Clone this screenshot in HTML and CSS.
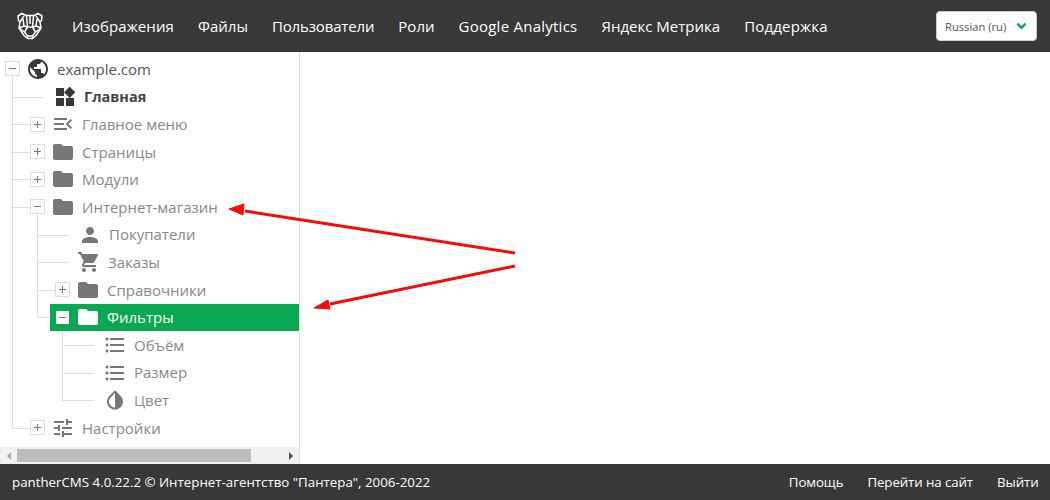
FILE: index.html
```html
<!DOCTYPE html>
<html lang="ru">
<head>
<meta charset="utf-8">
<title>pantherCMS</title>
<link rel="stylesheet" href="styles.css">
</head>
<body>
<div class="app">
  <header class="topbar">
    <svg class="logo" viewBox="0 0 28 28" fill="none" stroke="#fff" stroke-width="1.5" stroke-linejoin="round">
      <path d="M2 4 L6 1.5 L10 3.5 L18 3.5 L22 1.5 L26 4 L25.5 8.5 L24 10 L25 16 L20 23.5 L16.5 26.5 L11.5 26.5 L8 23.5 L3 16 L4 10 L2.5 8.5 Z"/>
      <path d="M4 10 L8 4 M24 10 L20 4 M10.5 3.5 L11.5 15 L8.5 20 L11.5 24 L16.5 24 L19.5 20 L16.5 15 L17.5 3.5 M14 3.5 L14 12 M7 7 L8 14 L3 16 M21 7 L20 14 L25 16 M8 14 L11.5 15 M20 14 L16.5 15 M8.5 20 L3 16 M19.5 20 L25 16 M11.5 15 L16.5 15 M11.5 24 L11.5 26.5 M16.5 24 L16.5 26.5"/>
    </svg>
    <nav class="mainnav">
      <a class="wide-s">Изображения</a><a>Файлы</a><a class="tight">Пользователи</a><a>Роли</a><a class="wide-l">Google Analytics</a><a>Яндекс Метрика</a><a class="wide-m">Поддержка</a>
    </nav>
    <div class="lang">
      <span>Russian (ru)</span>
      <svg class="chev" viewBox="0 0 12 8"><path d="M1.5 1.5 L6 6 L10.5 1.5" fill="none" stroke="#0aa850" stroke-width="2.6"/></svg>
    </div>
  </header>

  <div class="middle">
    <aside class="side">
      <div class="tree">
        <div class="row root">
          <i class="tog minus"></i>
          <svg class="ic dark" viewBox="0 0 24 24"><path d="M12 2C6.48 2 2 6.48 2 12s4.48 10 10 10 10-4.48 10-10S17.52 2 12 2zm-1 17.93c-3.95-.49-7-3.85-7-7.93 0-.62.08-1.21.21-1.79L9 15v1c0 1.1.9 2 2 2v1.93zm6.9-2.54c-.26-.81-1-1.39-1.9-1.39h-1v-3c0-.55-.45-1-1-1H8v-2h2c.55 0 1-.45 1-1V7h2c1.1 0 2-.9 2-2v-.41c2.93 1.19 5 4.06 5 7.41 0 2.08-.8 3.97-2.1 5.39z"/></svg>
          <span class="label rootlabel">example.com</span>
        </div>
        <div class="row l1 leaf home">
          <svg class="ic dark" viewBox="0 0 24 24"><path d="M13 13v8h8v-8h-8zM3 21h8v-8H3v8zM3 3v8h8V3H3zm13.66-1.31L11 7.34 16.66 13l5.66-5.66-5.66-5.65z"/></svg>
          <span class="label bold">Главная</span>
        </div>
        <div class="row l1">
          <i class="tog plus"></i>
          <svg class="ic" viewBox="0 0 24 24"><path d="M3 18h13v-2H3v2zm0-5h10v-2H3v2zm0-7v2h13V6H3zm18 9.59L17.42 12 21 8.41 19.59 7l-5 5 5 5L21 15.59z"/></svg>
          <span class="label">Главное меню</span>
        </div>
        <div class="row l1">
          <i class="tog plus"></i>
          <svg class="ic" viewBox="0 0 24 24"><path d="M10 4H4c-1.1 0-1.99.9-1.99 2L2 18c0 1.1.9 2 2 2h16c1.1 0 2-.9 2-2V8c0-1.1-.9-2-2-2h-8l-2-2z"/></svg>
          <span class="label">Страницы</span>
        </div>
        <div class="row l1">
          <i class="tog plus"></i>
          <svg class="ic" viewBox="0 0 24 24"><path d="M10 4H4c-1.1 0-1.99.9-1.99 2L2 18c0 1.1.9 2 2 2h16c1.1 0 2-.9 2-2V8c0-1.1-.9-2-2-2h-8l-2-2z"/></svg>
          <span class="label">Модули</span>
        </div>
        <div class="row l1 shop">
          <i class="tog minus"></i>
          <svg class="ic" viewBox="0 0 24 24"><path d="M10 4H4c-1.1 0-1.99.9-1.99 2L2 18c0 1.1.9 2 2 2h16c1.1 0 2-.9 2-2V8c0-1.1-.9-2-2-2h-8l-2-2z"/></svg>
          <span class="label">Интернет-магазин</span>
        </div>
        <div class="row l2 leaf">
          <svg class="ic" viewBox="0 0 24 24"><path d="M12 12c2.21 0 4-1.79 4-4s-1.79-4-4-4-4 1.79-4 4 1.79 4 4 4zm0 2c-2.67 0-8 1.34-8 4v2h16v-2c0-2.66-5.33-4-8-4z"/></svg>
          <span class="label">Покупатели</span>
        </div>
        <div class="row l2 leaf cart">
          <svg class="ic" viewBox="0 0 24 24"><path d="M7 18c-1.1 0-1.99.9-1.99 2S5.9 22 7 22s2-.9 2-2-.9-2-2-2zM1 2v2h2l3.6 7.59-1.35 2.45c-.16.28-.25.61-.25.96 0 1.1.9 2 2 2h12v-2H7.42c-.14 0-.25-.11-.25-.25l.03-.12.9-1.63h7.45c.75 0 1.41-.41 1.75-1.03l3.58-6.49c.08-.14.12-.31.12-.48 0-.55-.45-1-1-1H5.21l-.94-2H1zm16 16c-1.1 0-1.99.9-1.99 2s.89 2 1.99 2 2-.9 2-2-.9-2-2-2z"/></svg>
          <span class="label">Заказы</span>
        </div>
        <div class="row l2">
          <i class="tog plus"></i>
          <svg class="ic" viewBox="0 0 24 24"><path d="M10 4H4c-1.1 0-1.99.9-1.99 2L2 18c0 1.1.9 2 2 2h16c1.1 0 2-.9 2-2V8c0-1.1-.9-2-2-2h-8l-2-2z"/></svg>
          <span class="label">Справочники</span>
        </div>
        <div class="row l2 active">
          <i class="tog minus"></i>
          <svg class="ic white" viewBox="0 0 24 24"><path d="M10 4H4c-1.1 0-1.99.9-1.99 2L2 18c0 1.1.9 2 2 2h16c1.1 0 2-.9 2-2V8c0-1.1-.9-2-2-2h-8l-2-2z"/></svg>
          <span class="label">Фильтры</span>
        </div>
        <div class="row l3 leaf">
          <svg class="ic" viewBox="0 0 24 24"><path d="M4 10.5c-.83 0-1.5.67-1.5 1.5s.67 1.5 1.5 1.5 1.5-.67 1.5-1.5-.67-1.5-1.5-1.5zm0-6c-.83 0-1.5.67-1.5 1.5S3.17 7.5 4 7.5 5.5 6.83 5.5 6 4.83 4.5 4 4.5zm0 12c-.83 0-1.5.68-1.5 1.5s.68 1.5 1.5 1.5 1.5-.68 1.5-1.5-.67-1.5-1.5-1.5zM7 19h14v-2H7v2zm0-6h14v-2H7v2zm0-8v2h14V5H7z"/></svg>
          <span class="label">Объём</span>
        </div>
        <div class="row l3 leaf">
          <svg class="ic" viewBox="0 0 24 24"><path d="M4 10.5c-.83 0-1.5.67-1.5 1.5s.67 1.5 1.5 1.5 1.5-.67 1.5-1.5-.67-1.5-1.5-1.5zm0-6c-.83 0-1.5.67-1.5 1.5S3.17 7.5 4 7.5 5.5 6.83 5.5 6 4.83 4.5 4 4.5zm0 12c-.83 0-1.5.68-1.5 1.5s.68 1.5 1.5 1.5 1.5-.68 1.5-1.5-.67-1.5-1.5-1.5zM7 19h14v-2H7v2zm0-6h14v-2H7v2zm0-8v2h14V5H7z"/></svg>
          <span class="label">Размер</span>
        </div>
        <div class="row l3 leaf">
          <svg class="ic" viewBox="0 0 24 24"><path d="M17.66 7.93L12 2.27 6.34 7.93c-3.12 3.12-3.12 8.19 0 11.31C7.9 20.8 9.95 21.58 12 21.58s4.1-.78 5.66-2.34c3.12-3.12 3.12-8.19 0-11.31zM12 19.59c-1.6 0-3.11-.62-4.24-1.76C6.62 16.69 6 15.19 6 13.59s.62-3.11 1.76-4.24L12 5.1v14.49z"/></svg>
          <span class="label">Цвет</span>
        </div>
        <div class="row l1 last">
          <i class="tog plus"></i>
          <svg class="ic" viewBox="0 0 24 24"><path d="M3 17v2h6v-2H3zM3 5v2h10V5H3zm10 16v-2h8v-2h-8v-2h-2v6h2zM7 9v2H3v2h4v2h2V9H7zm14 4v-2H11v2h10zm-6-4h2V7h4V5h-4V3h-2v6z"/></svg>
          <span class="label">Настройки</span>
        </div>
        <i class="vline v0"></i>
        <i class="vline v1"></i>
        <i class="vline v2"></i>
      </div>
      <div class="hscroll">
        <span class="arr left"></span>
        <div class="track"><div class="thumb"></div></div>
        <span class="arr right"></span>
      </div>
    </aside>
    <main class="content"></main>
  </div>

  <footer class="foot">
    <span class="copy">pantherCMS 4.0.22.2 © Интернет-агентство "Пантера", 2006-2022</span>
    <nav class="footnav"><a>Помощь</a><a>Перейти на сайт</a><a>Выйти</a></nav>
  </footer>

  <svg class="arrows" viewBox="0 0 1050 500" aria-hidden="true">
    <path d="M515 253 L245 211" stroke="#f60a0a" stroke-width="3" fill="none"/>
    <path d="M229 209 L244 204 L243 215 Z" fill="#f60a0a" stroke="#f60a0a"/>
    <path d="M515 266 L330 304" stroke="#f60a0a" stroke-width="3" fill="none"/>
    <path d="M314 308 L328 300 L330 309 Z" fill="#f60a0a" stroke="#f60a0a"/>
  </svg>
</div>
</body>
</html>
```
FILE: styles.css
```css
* { box-sizing: border-box; }
html, body { margin: 0; height: 100%; }
body { font-family: "Open Sans", "Noto Sans", sans-serif; font-size: 15px; background: #fff; overflow: hidden; }
.app { position: relative; width: 1050px; height: 500px; display: flex; flex-direction: column; }

.topbar { height: 52px; flex: none; background: #383838; color: #fff; display: flex; align-items: center; padding: 0 13px 0 16px; }
.logo { width: 28px; height: 28px; flex: none; }
.mainnav { display: flex; gap: 24px; margin-left: 28px; flex: 1; }
.mainnav a { white-space: nowrap; }
.mainnav .wide-s { letter-spacing: .1px; }
.mainnav .wide-m { letter-spacing: .2px; }
.mainnav .wide-l { letter-spacing: .25px; }
.mainnav .tight { letter-spacing: -.15px; }
.lang { width: 101px; height: 30px; background: #fff; border: 1px solid #ccc; border-radius: 4px; color: #555; font-size: 11.2px; display: flex; align-items: center; justify-content: space-between; padding: 0 9px 0 8px; }
.chev { width: 11px; height: 8px; }

.middle { flex: 1; min-height: 0; display: flex; }
.side { width: 300px; flex: none; border-right: 1px solid #ddd; display: flex; flex-direction: column; }
.tree { position: relative; flex: 1; padding-top: 3.2px; overflow: hidden; }
.content { flex: 1; }

.row { position: relative; height: 27.6px; display: flex; align-items: center; color: #888; white-space: nowrap; }
.row .ic { width: 24px; height: 24px; margin: 0 -2px; flex: none; fill: #777; }
.row .ic.dark { fill: #383838; }
.row .ic.white { fill: #fff; }
.label { margin-left: 9px; margin-top: -.4px; }
.rootlabel { color: #555; }
.bold { font-weight: 700; color: #444; font-size: 14.5px; }

.tog { position: relative; width: 15px; height: 15px; flex: none; border: 1px solid #ddd; background: #fff; margin-right: 8px; z-index: 1; }
.tog::before { content: ""; position: absolute; left: 3px; right: 3px; top: 6px; height: 1px; background: #777; }
.tog.plus::after { content: ""; position: absolute; top: 3px; bottom: 3px; left: 6px; width: 1px; background: #777; }

.root { padding-left: 5px; }
.l1 { padding-left: 30px; }
.l1.leaf { padding-left: 55px; }
.l2 { padding-left: 55px; }
.l2.leaf { padding-left: 80px; }
.l2.cart { padding-left: 79px; }
.l3.leaf { padding-left: 105px; }

/* connector lines */
.l1::before, .l2::before, .l3::before { content: ""; position: absolute; top: 50%; height: 1px; background: #ddd; }
.l1::before { left: 12px; width: 18px; }
.l1.leaf::before { width: 32px; }
.l2::before { left: 37px; width: 18px; }
.l2.leaf::before { width: 32px; }
.l3::before { left: 62px; width: 32px; }
.vline { position: absolute; width: 1px; background: #ddd; }
.v0 { left: 12px; top: 24px; height: 352px; }
.v1 { left: 37px; top: 162px; height: 104px; }
.v2 { left: 62px; top: 279px; height: 69px; }

.active { color: #fff; }
.active::after { content: ""; position: absolute; left: 50px; right: 0; top: 0; bottom: 0; background: #0aa850; z-index: 0; }
.active .tog, .active .ic, .active .label { position: relative; z-index: 1; }
.active .tog { border-color: #0aa850; }

.hscroll { height: 17px; flex: none; background: #f1f1f1; display: flex; align-items: center; }
.track { flex: 1; height: 13px; }
.thumb { width: 234px; height: 13px; background: #bdbdbd; }
.arr { width: 17px; height: 17px; flex: none; display: flex; align-items: center; justify-content: center; }
.arr::before { content: ""; border: 4px solid transparent; }
.arr.left::before { border-right-color: #a3a3a3; border-left-width: 0; }
.arr.right::before { border-left-color: #505050; border-right-width: 0; }

.foot { height: 36px; flex: none; background: #383838; color: #fff; font-size: 13.3px; display: flex; align-items: center; justify-content: space-between; padding: 0 11.5px 0 12px; }
.footnav { display: flex; gap: 24px; letter-spacing: -.1px; }

.arrows { position: absolute; left: 0; top: 0; width: 1050px; height: 500px; pointer-events: none; }
```
